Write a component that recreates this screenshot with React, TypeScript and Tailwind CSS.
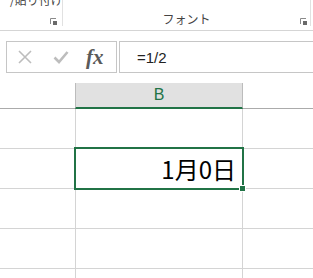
import React from "react";

const jp = { fontFamily: '"Noto Sans CJK JP", "Noto Sans", sans-serif' };

function Launcher() {
  return (
    <svg width="7" height="7" viewBox="0 0 7 7" className="block">
      <path d="M0.5 6 V0.5 H6" fill="none" stroke="#8a8a8a" strokeWidth="1" />
      <rect x="3" y="3" width="4" height="4" fill="#6a6a6a" />
    </svg>
  );
}

export default function App() {
  const rows = [0, 1, 2, 3, 4];
  return (
    <div className="relative w-[313px] h-[278px] overflow-hidden bg-white" style={jp}>
      {/* Ribbon */}
      <div className="flex h-[31px] border-b border-[#d5d5d5] bg-white">
        <div className="relative w-[62px] h-[26px] overflow-hidden">
          <div className="absolute left-[-62px] top-[-7px] whitespace-nowrap text-[12px] leading-[14px] text-[#444]">
            書式のコピー/貼り付け
          </div>
          <div className="absolute left-[50px] top-[18px]">
            <Launcher />
          </div>
        </div>
        <div className="w-px h-[26px] bg-[#e1e1e1]" />
        <div className="relative w-[247px] h-[26px]">
          <div className="absolute left-0 right-0 top-[12px] text-center text-[12px] leading-[14px] text-[#444]">
            フォント
          </div>
          <div className="absolute left-[237px] top-[18px]">
            <Launcher />
          </div>
        </div>
        <div className="w-px h-[26px] bg-[#e1e1e1]" />
      </div>

      {/* Formula bar */}
      <div className="flex h-[52px] pt-[10px] pl-[6px]">
        <div className="flex items-center w-[111px] h-[32px] border border-[#c6c6c6]">
          <svg width="14" height="14" viewBox="0 0 14 14" className="ml-[11px]">
            <path d="M1 1 L13 13 M13 1 L1 13" stroke="#bdbdbd" strokeWidth="1.6" />
          </svg>
          <svg width="16" height="14" viewBox="0 0 16 14" className="ml-[21px]">
            <path d="M1.5 7.5 L6 12 L14.5 2" fill="none" stroke="#bdbdbd" strokeWidth="2.6" />
          </svg>
          <span
            className="ml-[17px] text-[21px] italic font-bold leading-none text-[#5a5a5a]"
            style={{ fontFamily: '"Liberation Serif", serif' }}
          >
            fx
          </span>
        </div>
        <div className="ml-[2px] flex-1 h-[32px] border border-r-0 border-[#c6c6c6] flex items-center pl-[17px]">
          <span className="text-[15px] leading-none text-[#222]" style={{ fontFamily: '"Liberation Sans", sans-serif' }}>
            =1/2
          </span>
        </div>
      </div>

      {/* Column header */}
      <div className="flex h-[26px]">
        <div className="w-[75px] border-b border-[#ababab]" />
        <div className="w-[168px] bg-[#e1e1e1] border-l border-r border-[#bcbcbc] border-b-2 border-b-[#217346] flex items-center justify-center">
          <span className="text-[16px] text-[#217346]" style={{ fontFamily: '"Liberation Sans", sans-serif' }}>
            B
          </span>
        </div>
        <div className="flex-1 border-b border-[#ababab]" />
      </div>

      {/* Rows */}
      {rows.map((r) => (
        <div key={r} className="flex h-[40px] border-b border-[#d4d4d4]">
          <div className="w-[75px]" />
          <div className="w-[168px] border-l border-r border-[#d4d4d4] flex items-center justify-end pr-[6px]">
            {r === 1 && <span className="text-[24px] leading-none text-black">1月0日</span>}
          </div>
          <div className="flex-1" />
        </div>
      ))}

      {/* Selection */}
      <div className="absolute left-[74px] top-[147px] w-[170px] h-[43px] border-2 border-[#217346]" />
      <div className="absolute left-[239px] top-[185px] w-[7px] h-[7px] bg-[#217346] border border-white" />
    </div>
  );
}
